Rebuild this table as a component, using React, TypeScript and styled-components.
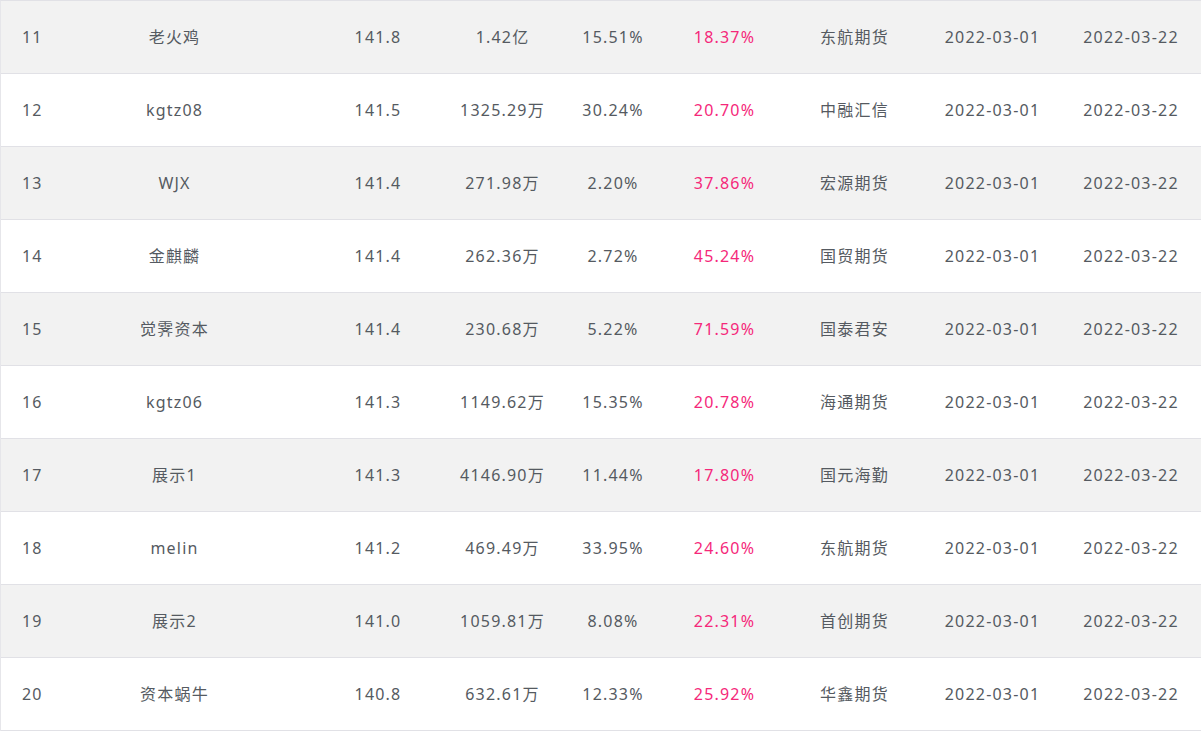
import React from "react";
import styled, { createGlobalStyle } from "styled-components";

const GlobalStyle = createGlobalStyle`
  html, body { margin: 0; padding: 0; background: #ffffff; }
  body { font-family: "Noto Sans", "Noto Sans CJK SC", sans-serif; }
`;

const Table = styled.div`
  width: 1201px;
  box-sizing: border-box;
  border-top: 1px solid #e1e1e6;
  border-left: 1px solid #e6e6ea;
`;

const Row = styled.div<{ $alt: boolean }>`
  display: grid;
  grid-template-columns: 35px 277px 130px 119px 102px 121px 139px 137px 140px;
  height: 72px;
  align-items: center;
  background: ${(p) => (p.$alt ? "#f2f2f2" : "#ffffff")};
  border-bottom: 1px solid #e1e1e6;
  color: #555a61;
  font-size: 16px;
  line-height: 20px;
  letter-spacing: 1.2px;
  white-space: nowrap;
`;

const Cell = styled.div<{ $left?: boolean; $pink?: boolean }>`
  text-align: ${(p) => (p.$left ? "left" : "center")};
  padding-left: ${(p) => (p.$left ? "21px" : "0")};
  padding-bottom: 1px;
  color: ${(p) => (p.$pink ? "#f5287a" : "inherit")};
  overflow: visible;
`;

const rows = [
  ["11", "老火鸡", "141.8", "1.42亿", "15.51%", "18.37%", "东航期货"],
  ["12", "kgtz08", "141.5", "1325.29万", "30.24%", "20.70%", "中融汇信"],
  ["13", "WJX", "141.4", "271.98万", "2.20%", "37.86%", "宏源期货"],
  ["14", "金麒麟", "141.4", "262.36万", "2.72%", "45.24%", "国贸期货"],
  ["15", "觉霁资本", "141.4", "230.68万", "5.22%", "71.59%", "国泰君安"],
  ["16", "kgtz06", "141.3", "1149.62万", "15.35%", "20.78%", "海通期货"],
  ["17", "展示1", "141.3", "4146.90万", "11.44%", "17.80%", "国元海勤"],
  ["18", "melin", "141.2", "469.49万", "33.95%", "24.60%", "东航期货"],
  ["19", "展示2", "141.0", "1059.81万", "8.08%", "22.31%", "首创期货"],
  ["20", "资本蜗牛", "140.8", "632.61万", "12.33%", "25.92%", "华鑫期货"],
];

export default function App() {
  return (
    <>
      <GlobalStyle />
      <Table>
        {rows.map((r, i) => (
          <Row key={r[0]} $alt={i % 2 === 0}>
            <Cell $left>{r[0]}</Cell>
            <Cell>{r[1]}</Cell>
            <Cell>{r[2]}</Cell>
            <Cell>{r[3]}</Cell>
            <Cell>{r[4]}</Cell>
            <Cell $pink>{r[5]}</Cell>
            <Cell>{r[6]}</Cell>
            <Cell>2022-03-01</Cell>
            <Cell>2022-03-22</Cell>
          </Row>
        ))}
      </Table>
    </>
  );
}
